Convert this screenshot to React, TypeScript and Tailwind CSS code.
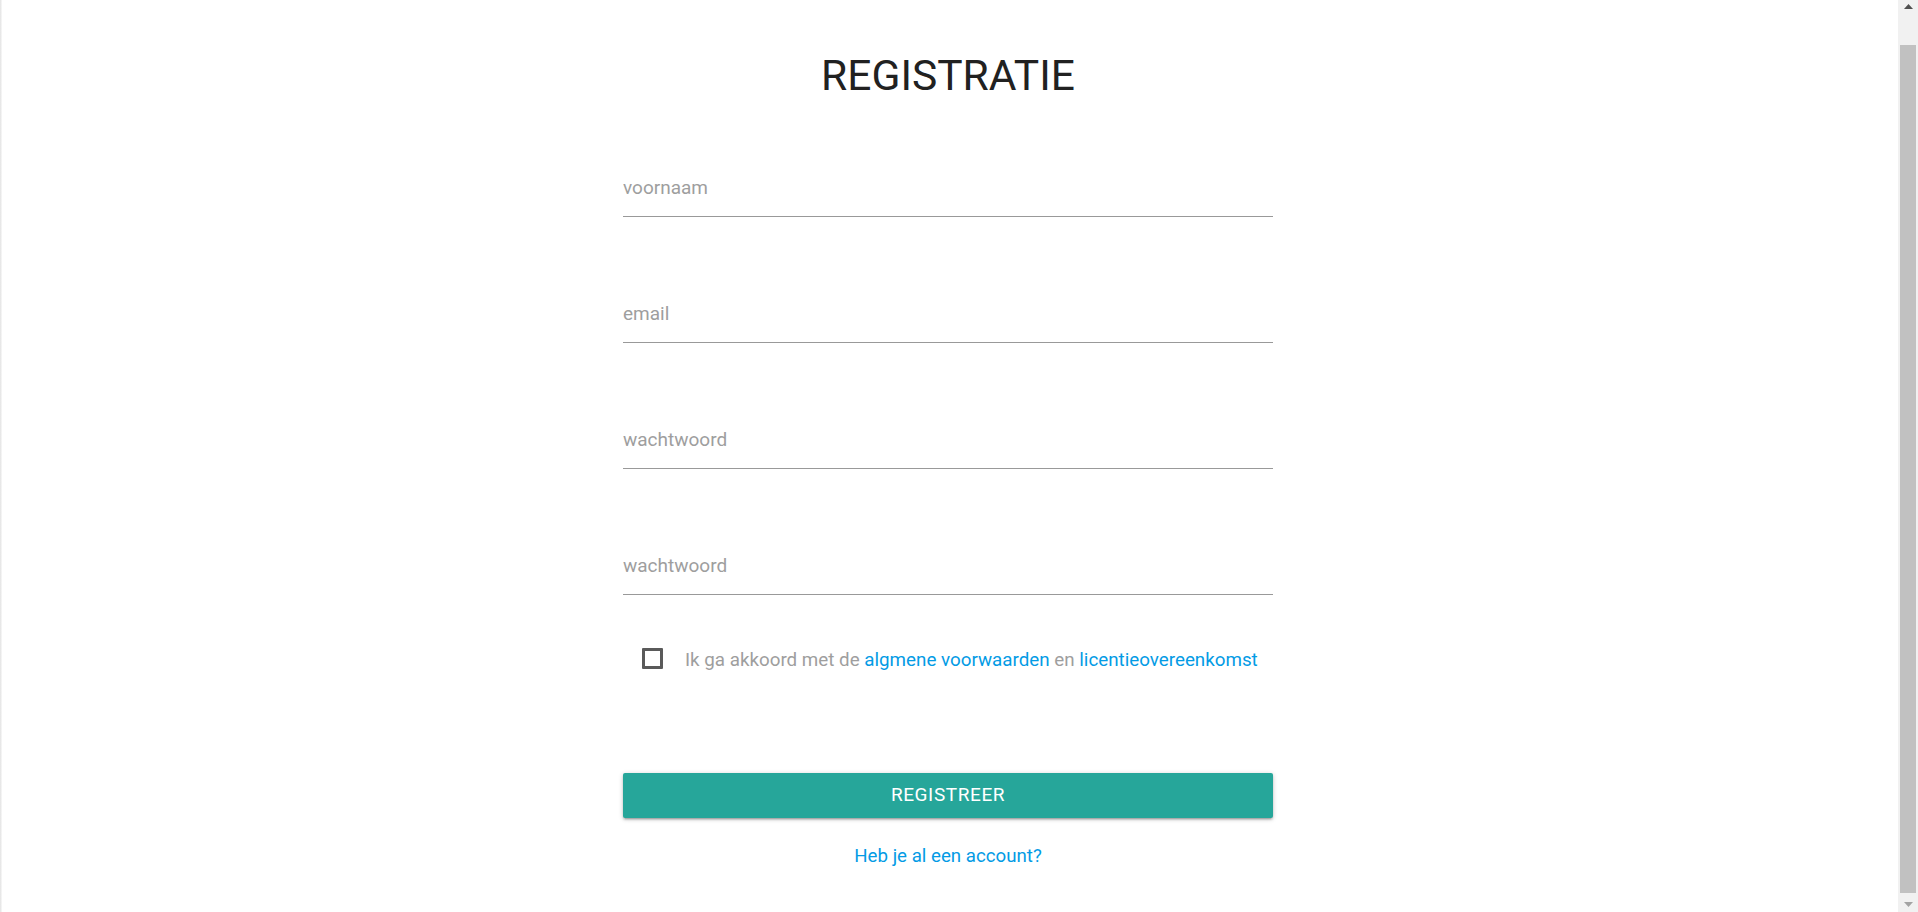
import { useState } from 'react';

const fields = [
  { name: 'voornaam', type: 'text' },
  { name: 'email', type: 'email' },
  { name: 'wachtwoord', type: 'password' },
  { name: 'wachtwoord', type: 'password' },
];

function ScrollBar() {
  return (
    <aside className="flex w-[20px] flex-col bg-[#f1f1f1]">
      <div className="flex h-[17px] items-start justify-center pt-[4px]">
        <svg width="9" height="5" viewBox="0 0 9 5">
          <polygon points="4.5,0 9,5 0,5" fill="#505050" />
        </svg>
      </div>
      <div className="flex-1 pt-[28px] pb-[2px]">
        <div className="mx-[2px] h-full bg-[#c1c1c1]" />
      </div>
      <div className="flex h-[17px] items-end justify-center pb-[5px]">
        <svg width="9" height="5" viewBox="0 0 9 5">
          <polygon points="0,0 9,0 4.5,5" fill="#a3a3a3" />
        </svg>
      </div>
    </aside>
  );
}

export default function App() {
  const [agreed, setAgreed] = useState(false);

  return (
    <div className="flex h-screen w-full overflow-hidden bg-white font-['Roboto','Liberation_Sans',sans-serif]">
      <div className="w-[2px] bg-gradient-to-r from-[#e2e2e2] to-[#f9f9f9]" />
      <main className="flex-1 pr-[4px]">
        <div className="mx-auto w-[650px] pt-[51px]">
          <h1 className="text-center text-[42.5px] font-normal leading-[50px] text-[#212121]">REGISTRATIE</h1>

          <form className="mt-[57px] flex flex-col gap-[67px]" onSubmit={e => e.preventDefault()}>
            {fields.map((f, i) => (
              <input
                key={i}
                type={f.type}
                placeholder={f.name}
                className="h-[59px] w-full border-b border-[#999999] bg-transparent text-[19px] text-[#212121] outline-none placeholder:text-[#9e9e9e]"
              />
            ))}
          </form>

          <div className="mt-[53px] ml-[19px] flex items-start">
            <button
              type="button"
              onClick={() => setAgreed(!agreed)}
              className={`h-[21px] w-[21px] shrink-0 rounded-[1px] border-[3px] ${agreed ? 'border-[#26a69a] bg-[#26a69a]' : 'border-[#5a5a5a] bg-white'}`}
            />
            <p className="mt-[2px] ml-[22px] text-[18.8px] leading-[21px] text-[#9e9e9e]">
              Ik ga akkoord met de <a className="text-[#039be5]">algmene voorwaarden</a> en{' '}
              <a className="text-[#039be5]">licentieovereenkomst</a>
            </p>
          </div>

          <button
            type="button"
            className="mt-[102px] flex h-[45px] w-full items-center justify-center rounded-[2px] bg-[#26a69a] text-[19px] tracking-[0.6px] text-white shadow-[0_2px_2px_0_rgba(0,0,0,0.14),0_3px_1px_-2px_rgba(0,0,0,0.12),0_1px_5px_0_rgba(0,0,0,0.2)]"
          >
            REGISTREER
          </button>

          <p className="mt-[26px] text-center text-[18.7px] leading-[24px]">
            <a className="text-[#039be5]">Heb je al een account?</a>
          </p>
        </div>
      </main>
      <ScrollBar />
    </div>
  );
}
